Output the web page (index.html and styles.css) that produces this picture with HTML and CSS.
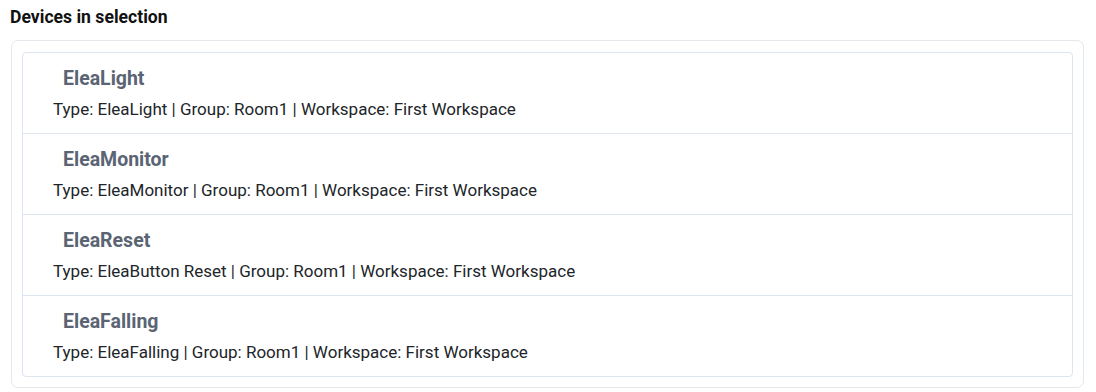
FILE: index.html
```html
<!DOCTYPE html>
<html lang="en">
<head>
  <meta charset="UTF-8">
  <title>Devices in selection</title>
  <link rel="stylesheet" href="styles.css">
</head>
<body>
  <h4 class="section-title">Devices in selection</h4>
  <div class="card">
    <ul class="device-list">
      <li class="device">
        <h5 class="device-name">EleaLight</h5>
        <p class="device-info">Type: EleaLight | Group: Room1 | Workspace: First Workspace</p>
      </li>
      <li class="device">
        <h5 class="device-name">EleaMonitor</h5>
        <p class="device-info">Type: EleaMonitor | Group: Room1 | Workspace: First Workspace</p>
      </li>
      <li class="device">
        <h5 class="device-name">EleaReset</h5>
        <p class="device-info">Type: EleaButton Reset | Group: Room1 | Workspace: First Workspace</p>
      </li>
      <li class="device">
        <h5 class="device-name">EleaFalling</h5>
        <p class="device-info">Type: EleaFalling | Group: Room1 | Workspace: First Workspace</p>
      </li>
    </ul>
  </div>
</body>
</html>
```

FILE: styles.css
```css
body {
  margin: 0;
  padding: 7px 12px 0 10px;
  font-family: Roboto, "Liberation Sans", sans-serif;
  color: #212529;
  background: #fff;
}
.section-title {
  margin: 0 0 13px 0;
  font-size: 17.6px;
  font-weight: 700;
  line-height: 20px;
  color: #111;
}
.card {
  margin-left: 1px;
  border: 1px solid #e4e7eb;
  border-radius: 7px;
  padding: 11px 10px 10px 10px;
}
.device-list {
  list-style: none;
  margin: 0;
  padding: 0;
  border: 1px solid #dde5f0;
  border-radius: 4px;
}
.device {
  height: 66px;
  padding: 14px 30px 0 30px;
  border-top: 1px solid #dde5f0;
}
.device:first-child {
  border-top: none;
}
.device-name {
  margin: 0 0 7px 10px;
  font-size: 19.5px;
  font-weight: 700;
  line-height: 24px;
  color: #5a6473;
}
.device-info {
  margin: 0;
  font-size: 17px;
  line-height: 22px;
}
```
